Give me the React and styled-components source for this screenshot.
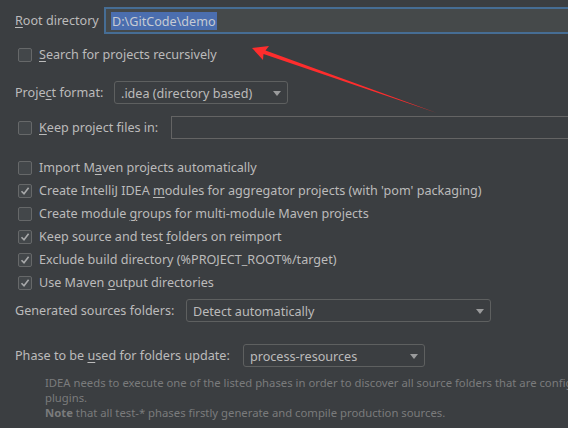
import React from "react";
import styled, { createGlobalStyle } from "styled-components";

const Global = createGlobalStyle`
  html, body { margin: 0; padding: 0; background: #3b3e41; }
  body { width: 568px; height: 428px; overflow: hidden; }
  * { box-sizing: border-box; }
`;

const Page = styled.div`
  position: relative;
  width: 568px;
  height: 428px;
  overflow: hidden;
  background: #3b3e41;
  color: #bbbbbb;
  font-family: "Noto Sans", "Open Sans", sans-serif;
  font-size: 12.6px;
  padding: 7px 0 0 15px;
  display: flex;
  flex-direction: column;
`;

const Row = styled.div`
  display: flex;
  align-items: center;
  height: ${(p) => p.$h || 23}px;
  margin-top: ${(p) => p.$mt || 0}px;
  white-space: nowrap;
`;

const Label = styled.span`
  display: inline-block;
  width: ${(p) => (p.$w ? `${p.$w}px` : "auto")};
  flex: none;
  line-height: 1;
  padding-top: 2px;
`;

const U = styled.span`
  text-decoration: underline;
  text-underline-offset: 2px;
`;

const RootField = styled.div`
  flex: none;
  width: 480px;
  height: 27px;
  border: 2px solid #466d94;
  background: #45494a;
  padding: 0 0 0 5px;
  display: flex;
  align-items: center;
`;

const Selection = styled.span`
  background: #4b6eaf;
  color: #c6cbd3;
  height: 18px;
  line-height: 19px;
  padding: 0 1px;
`;

const TextField = styled.div`
  flex: none;
  width: 420px;
  height: 23px;
  border: 1px solid #646464;
  background: #3b3e41;
`;

const Select = styled.div`
  flex: none;
  width: ${(p) => p.$w}px;
  height: 23px;
  border: 1px solid #5e6060;
  border-radius: 3px;
  display: flex;
  align-items: center;
  justify-content: space-between;
  padding: 1px 6px 0 6px;
  color: #bbbbbb;
`;

const Arrow = styled.span`
  width: 0;
  height: 0;
  border-left: 4.5px solid transparent;
  border-right: 4.5px solid transparent;
  border-top: 5px solid #9a9b9c;
`;

const CheckRow = styled(Row)`
  padding-left: 3px;
`;

const Box = styled.span`
  flex: none;
  width: 14px;
  height: 14px;
  border: 1px solid #666869;
  border-radius: 2px;
  background: #43474a;
  margin-right: 7px;
  display: flex;
  align-items: center;
  justify-content: center;
`;

const Help = styled.div`
  margin-top: 8px;
  padding-left: 30px;
  font-size: 11.3px;
  line-height: 15px;
  color: #7a7b7c;
  white-space: nowrap;
  overflow: hidden;
`;

const HelpLine = styled.div`
  height: 15px;
  overflow: hidden;
`;

const Bold = styled.b`
  font-weight: 700;
`;

const Overlay = styled.svg`
  position: absolute;
  left: 0;
  top: 0;
  pointer-events: none;
`;

const Check = () => (
  <svg width="10" height="10" viewBox="0 0 10 10">
    <path d="M1.5 5.2 L4 7.8 L8.6 1.8" fill="none" stroke="#a8a9aa" strokeWidth="1.6" />
  </svg>
);

const CheckItem = ({ checked, children, mt }) => (
  <CheckRow $mt={mt}>
    <Box>{checked && <Check />}</Box>
    <Label>{children}</Label>
  </CheckRow>
);

export default function App() {
  return (
    <>
      <Global />
      <Page>
        <Row $h={27}>
          <Label $w={89}>
            <U>R</U>oot directory
          </Label>
          <RootField>
            <Selection>D:\GitCode\demo</Selection>
          </RootField>
        </Row>
        <CheckItem mt={9}>
          <U>S</U>earch for projects recursively
        </CheckItem>
        <Row $mt={15}>
          <Label $w={99}>
            Proje<U>c</U>t format:
          </Label>
          <Select $w={174}>
            <span>.idea (directory based)</span>
            <Arrow />
          </Select>
        </Row>
        <CheckRow $mt={12}>
          <Box />
          <Label $w={132}>
            <U>K</U>eep project files in:
          </Label>
          <TextField />
        </CheckRow>
        <CheckItem mt={17}>
          Import M<U>a</U>ven projects automatically
        </CheckItem>
        <CheckItem checked>
          Create IntelliJ IDEA <U>m</U>odules for aggregator projects (with 'pom' packaging)
        </CheckItem>
        <CheckItem>
          Create module <U>g</U>roups for multi-module Maven projects
        </CheckItem>
        <CheckItem checked>
          Keep source and test <U>f</U>olders on reimport
        </CheckItem>
        <CheckItem checked>Exclude build directory (%PROJECT_ROOT%/target)</CheckItem>
        <CheckItem checked>
          Use Maven <U>o</U>utput directories
        </CheckItem>
        <Row $mt={5}>
          <Label $w={171}>Generated sources folders:</Label>
          <Select $w={305}>
            <span>Detect automatically</span>
            <Arrow />
          </Select>
        </Row>
        <Row $mt={22}>
          <Label $w={228}>
            Phase to be <U>u</U>sed for folders update:
          </Label>
          <Select $w={182}>
            <span>process-resources</span>
            <Arrow />
          </Select>
        </Row>
        <Help>
          <HelpLine>
            IDEA needs to execute one of the listed phases in order to discover all source folders that are configured by
          </HelpLine>
          <HelpLine>plugins.</HelpLine>
          <HelpLine>
            <Bold>Note</Bold> that all test-* phases firstly generate and compile production sources.
          </HelpLine>
        </Help>
        <Overlay width="568" height="428" viewBox="0 0 568 428">
          <path
            d="M252 48 L269 46 L265.5 50.5 L437 113 L263.5 54 L263 60 Z"
            fill="#fe2d2d"
          />
        </Overlay>
      </Page>
    </>
  );
}
